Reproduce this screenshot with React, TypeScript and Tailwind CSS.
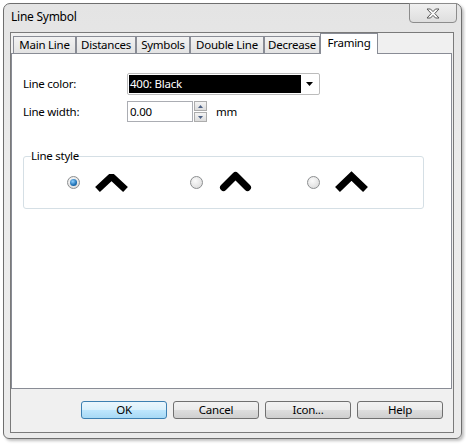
import React, { useState } from 'react';

const FONT = "font-['Noto_Sans','Liberation_Sans',sans-serif]";

const tabs = [
  { id: 'main', label: 'Main Line', w: 'w-[63px]' },
  { id: 'dist', label: 'Distances', w: 'w-[60px]' },
  { id: 'sym', label: 'Symbols', w: 'w-[54px]' },
  { id: 'dbl', label: 'Double Line', w: 'w-[74px]' },
  { id: 'dec', label: 'Decrease', w: 'w-[56px]' },
  { id: 'frame', label: 'Framing', w: 'w-[58px]' },
];

function Radio({ checked, onClick }: { checked: boolean; onClick: () => void }) {
  return (
    <button
      onClick={onClick}
      className="w-[13px] h-[13px] rounded-full border border-[#8c8e90] bg-[radial-gradient(circle_at_40%_35%,#fbfbfb,#d6d6d6)] flex items-center justify-center shrink-0"
    >
      {checked && (
        <span className="w-[7px] h-[7px] rounded-full bg-[radial-gradient(circle_at_40%_35%,#8fd0ff,#1b6fb4_60%,#0f4a7e)]" />
      )}
    </button>
  );
}

// chevron samples for the three joins
function Chevron({ kind }: { kind: 'bevel' | 'round' | 'miter' }) {
  if (kind === 'round') {
    return (
      <svg width="36" height="22" viewBox="0 0 36 22" className="shrink-0">
        <polyline points="4.5,16.5 16.5,4.5 28.5,16.5" fill="none" stroke="#000" strokeWidth="7" strokeLinecap="round" strokeLinejoin="round" />
      </svg>
    );
  }
  return (
    <svg width="36" height="22" viewBox="0 0 36 22" className="shrink-0">
      <polyline
        points={kind === 'bevel' ? '3.5,18.5 17.5,5.5 31.5,18.5' : '3.5,18.5 17.5,5 31.5,18.5'}
        fill="none"
        stroke="#000"
        strokeWidth="7"
        strokeLinecap="butt"
        strokeLinejoin={kind}
        strokeMiterlimit={4}
      />
    </svg>
  );
}

function Button({ label, primary }: { label: string; primary?: boolean }) {
  return (
    <button
      className={`w-[86px] h-[18px] rounded-[3px] border leading-none text-black flex items-center justify-center ${
        primary
          ? 'border-[#3c7fb1] bg-[linear-gradient(to_bottom,#eaf6fd_0%,#d9f0fc_50%,#bee6fd_51%,#a7d9f5_100%)]'
          : 'border-[#707070] bg-[linear-gradient(to_bottom,#f2f2f2_0%,#ebebeb_50%,#dddddd_51%,#cfcfcf_100%)]'
      }`}
    >
      {label}
    </button>
  );
}

export default function App() {
  const [tab, setTab] = useState('frame');
  const [style, setStyle] = useState(0);

  return (
    <div className={`w-[466px] h-[446px] bg-white overflow-hidden ${FONT} text-[11.5px] tracking-[-0.25px] text-black`}>
      <div className="ml-[3px] mt-[3px] w-[459px] h-[436px] rounded-t-[7px] rounded-b-[6px] border border-[#6e6e6e] bg-[linear-gradient(to_bottom,#e4e4e4,#ececec_40%,#ebebeb)] shadow-[2px_2px_3px_rgba(0,0,0,0.25)] flex flex-col">
        {/* title bar */}
        <div className="h-[28px] flex items-start">
          <span className="pl-[7px] pt-[5px] leading-[16px] text-[12px]">Line Symbol</span>
          <button className="ml-auto mr-[4px] mt-[-1px] w-[48px] h-[20px] rounded-b-[4px] border border-[#8c8c8c] bg-[linear-gradient(to_bottom,#f0f0f0,#dedede)] flex items-center justify-center">
            <svg width="14" height="11" viewBox="0 0 14 11">
              <path
                d="M1 1 H4.5 L7 3.6 L9.5 1 H13 L8.8 5.5 L13 10 H9.5 L7 7.4 L4.5 10 H1 L5.2 5.5 Z"
                fill="#fafafa"
                stroke="#5a5a5a"
                strokeWidth="1"
                strokeLinejoin="round"
              />
            </svg>
          </button>
        </div>

        {/* client area */}
        <div className="ml-[6px] w-[444px] h-[401px] border border-[#7a7a7a] bg-[#f0f0f0] flex flex-col">
          <div className="h-[20px] pl-[2px] flex items-end">
            {tabs.map((t) => {
              const active = tab === t.id;
              return (
                <button
                  key={t.id}
                  onClick={() => setTab(t.id)}
                  className={`${t.w} border border-b-0 border-[#898c95] flex justify-center whitespace-nowrap ${
                    active
                      ? 'h-[21px] mb-[-1px] relative z-10 bg-white pt-[1px] items-start'
                      : 'h-[17px] bg-[linear-gradient(to_bottom,#f2f2f2,#e3e3e3)] items-center'
                  }`}
                >
                  <span className="leading-[16px]">{t.label}</span>
                </button>
              );
            })}
          </div>

          <div className="w-[441px] h-[336px] border border-[#898c95] bg-white pl-[11px] pt-[19px] flex flex-col">
            <div className="flex items-center h-[22px]">
              <span className="w-[104px]">Line color:</span>
              <div className="w-[193px] h-[22px] rounded-[2px] border border-[#bcbcbc] bg-white flex items-center p-[1px]">
                <div className="w-[172px] h-[18px] bg-black text-white pl-[1px] flex items-center leading-none">400: Black</div>
                <div className="flex-1 flex items-center justify-center">
                  <svg width="7" height="4" viewBox="0 0 7 4">
                    <path d="M0 0 H7 L3.5 4 Z" fill="#000" />
                  </svg>
                </div>
              </div>
            </div>

            <div className="flex items-center h-[21px] mt-[6px]">
              <span className="w-[104px]">Line width:</span>
              <div className="w-[66px] h-[21px] border border-[#abadb3] bg-white pl-[2px] flex items-center leading-none">0.00</div>
              <div className="ml-[1px] w-[13px] h-[21px] flex flex-col gap-[1px]">
                <div className="h-[10px] border border-[#acacac] bg-[linear-gradient(to_bottom,#f4f4f4,#dcdcdc)] flex items-center justify-center">
                  <svg width="5" height="3" viewBox="0 0 5 3">
                    <path d="M0 3 H5 L2.5 0 Z" fill="#4d6185" />
                  </svg>
                </div>
                <div className="h-[10px] border border-[#acacac] bg-[linear-gradient(to_bottom,#f4f4f4,#dcdcdc)] flex items-center justify-center">
                  <svg width="5" height="3" viewBox="0 0 5 3">
                    <path d="M0 0 H5 L2.5 3 Z" fill="#4d6185" />
                  </svg>
                </div>
              </div>
              <span className="ml-[9px]">mm</span>
            </div>

            <fieldset className="mt-[26px] w-[401px] h-[61px] rounded-[3px] border border-[#d5dfe5] px-0">
              <legend className="ml-[7px] px-0 leading-[16px]">Line style</legend>
              <div className="h-[36px] flex items-center">
                <div className="ml-[43px]">
                  <Radio checked={style === 0} onClick={() => setStyle(0)} />
                </div>
                <div className="ml-[14px] flex">
                  <Chevron kind="bevel" />
                </div>
                <div className="ml-[60px]">
                  <Radio checked={style === 1} onClick={() => setStyle(1)} />
                </div>
                <div className="ml-[16px] flex">
                  <Chevron kind="round" />
                </div>
                <div className="ml-[52px]">
                  <Radio checked={style === 2} onClick={() => setStyle(2)} />
                </div>
                <div className="ml-[14px] flex">
                  <Chevron kind="miter" />
                </div>
              </div>
            </fieldset>
          </div>

          <div className="mt-[12px] pr-[10px] flex justify-end gap-[6px]">
            <Button label="OK" primary />
            <Button label="Cancel" />
            <Button label="Icon..." />
            <Button label="Help" />
          </div>
        </div>
      </div>
    </div>
  );
}
